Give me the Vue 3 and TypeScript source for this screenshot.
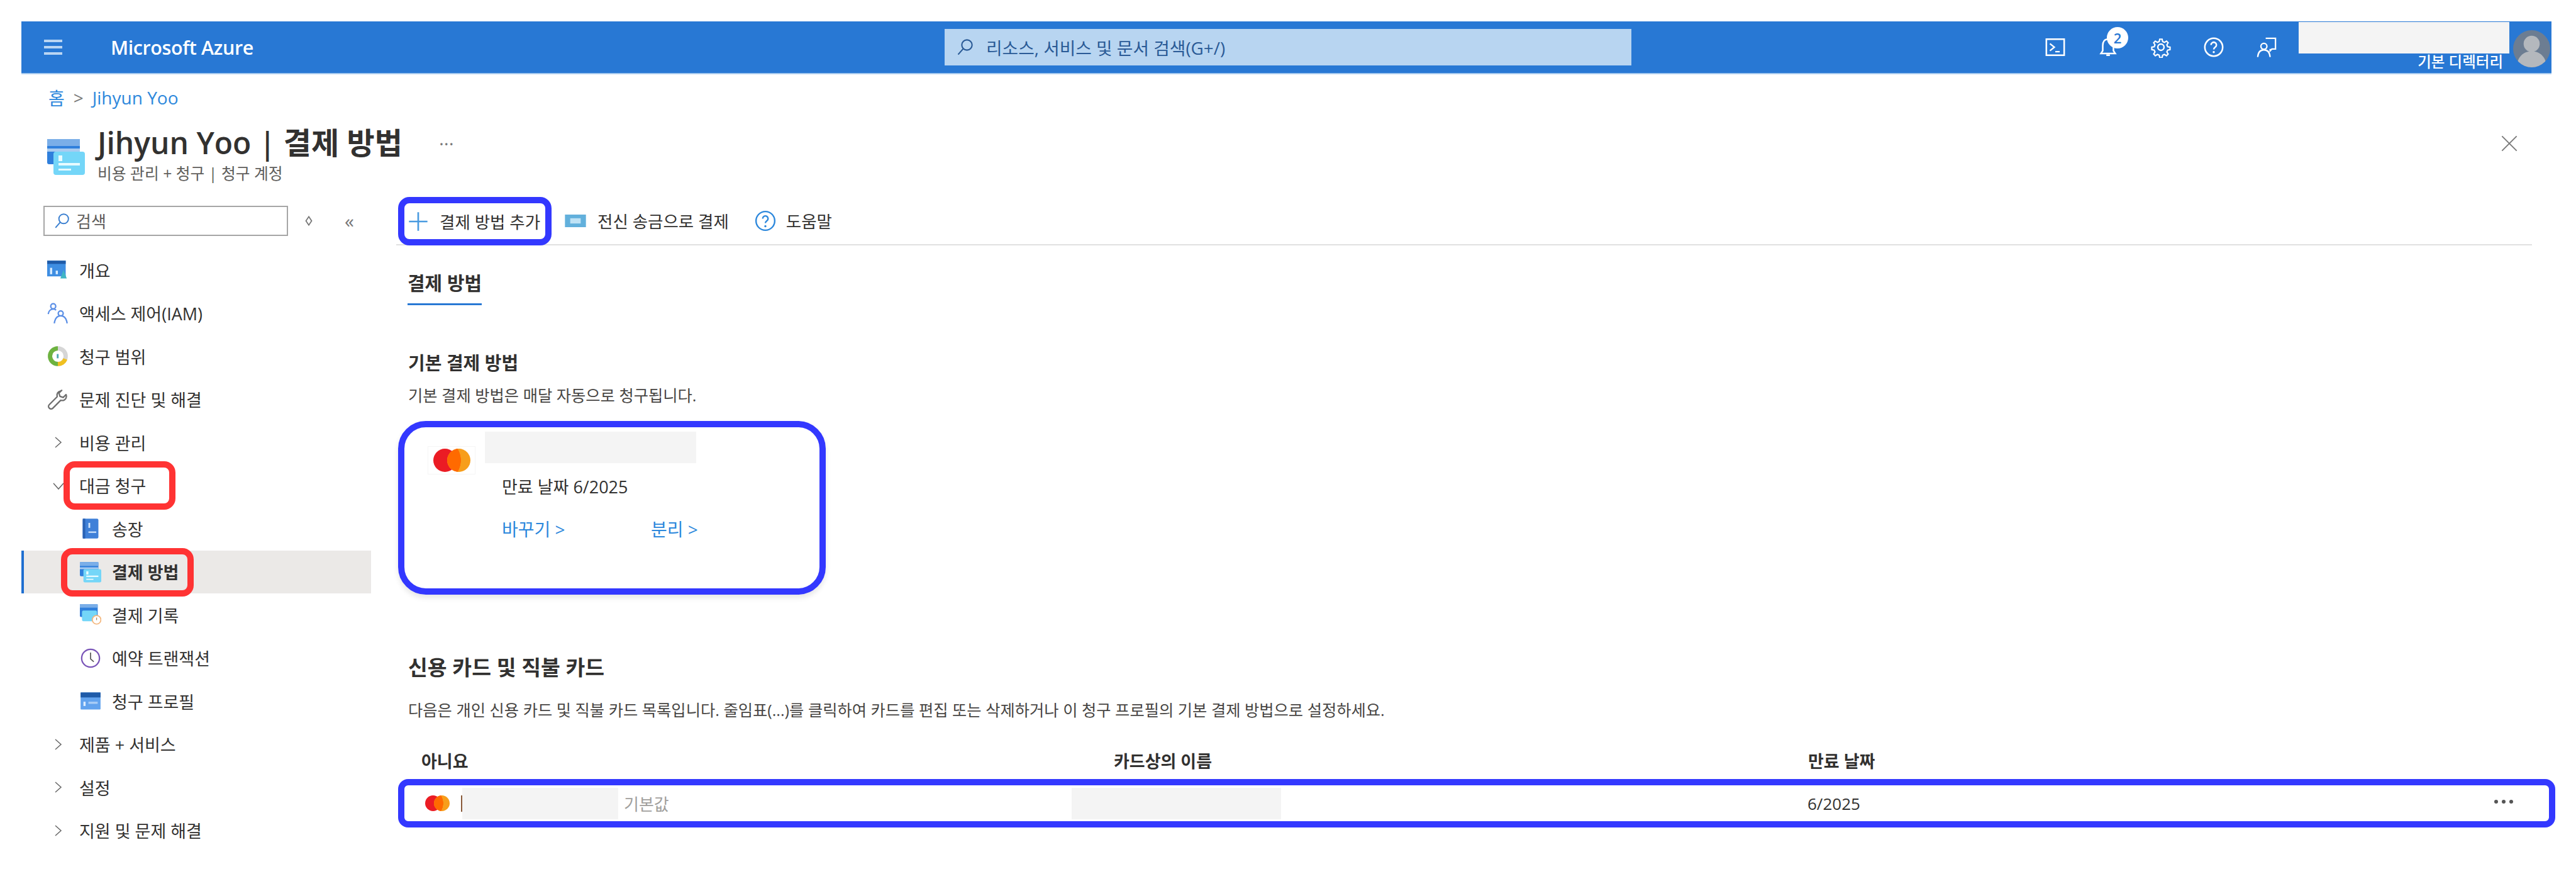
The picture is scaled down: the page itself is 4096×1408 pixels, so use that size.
<script setup lang="ts">
interface MenuItem {
  label: string
  icon?: string
  chevron?: 'right' | 'down'
  child?: boolean
  active?: boolean
  mark?: 'group' | 'entry'
}

const menu: MenuItem[] = [
  { label: '개요', icon: 'i-overview' },
  { label: '액세스 제어(IAM)', icon: 'i-iam' },
  { label: '청구 범위', icon: 'i-scope' },
  { label: '문제 진단 및 해결', icon: 'i-wrench' },
  { label: '비용 관리', chevron: 'right' },
  { label: '대금 청구', chevron: 'down', mark: 'group' },
  { label: '송장', icon: 'i-invoice', child: true },
  { label: '결제 방법', icon: 'i-card', child: true, active: true, mark: 'entry' },
  { label: '결제 기록', icon: 'i-history', child: true },
  { label: '예약 트랜잭션', icon: 'i-clock', child: true },
  { label: '청구 프로필', icon: 'i-profile', child: true },
  { label: '제품 + 서비스', chevron: 'right' },
  { label: '설정', chevron: 'right' },
  { label: '지원 및 문제 해결', chevron: 'right' },
]
</script>

<template>
  <div class="page">
    <svg class="defs" aria-hidden="true">
      <symbol id="i-card" viewBox="0 0 60 60">
        <rect x="0" y="2" width="52" height="40" rx="3" fill="#2f7fdc" />
        <rect x="0" y="2" width="52" height="11" fill="#7aaee8" />
        <rect x="0" y="17" width="52" height="5" fill="#a9cbf0" />
        <rect x="10" y="22" width="50" height="37" rx="4" fill="#74d6f8" />
        <rect x="18" y="40" width="34" height="4" fill="#e8fbff" />
        <rect x="18" y="49" width="20" height="3" fill="#e8fbff" />
        <rect x="18" y="28" width="6" height="9" fill="#e8fbff" />
      </symbol>
      <symbol id="i-history" viewBox="0 0 60 60">
        <rect x="0" y="0" width="50" height="36" rx="3" fill="#2f7fdc" />
        <rect x="0" y="0" width="50" height="10" fill="#7aaee8" />
        <rect x="6" y="18" width="42" height="30" rx="4" fill="#74d6f8" />
        <circle cx="47" cy="44" r="12" fill="#fff" stroke="#f3b57a" stroke-width="3" />
        <path d="M47 38v7" stroke="#a87a4a" stroke-width="2" />
      </symbol>
      <symbol id="i-overview" viewBox="0 0 60 60">
        <rect x="0" y="4" width="52" height="44" fill="#3f8ee2" />
        <rect x="0" y="4" width="52" height="9" fill="#1f5ba8" />
        <rect x="8" y="24" width="6" height="18" fill="#d8ecff" />
        <rect x="24" y="32" width="6" height="10" fill="#d8ecff" />
        <path d="M46 30l9 24H37z" fill="#3fb5c4" />
      </symbol>
      <symbol id="i-iam" viewBox="0 0 60 60">
        <g fill="none" stroke="#5b8fe6" stroke-width="4">
          <circle cx="17" cy="10" r="7" />
          <path d="M3 32c1-9 7-14 14-14 3 0 6 1 8 3" />
          <circle cx="38" cy="30" r="7" />
          <path d="M20 58c2-14 9-21 18-21s16 7 18 21" />
        </g>
      </symbol>
      <symbol id="i-scope" viewBox="0 0 60 60">
        <circle cx="30" cy="30" r="22" fill="none" stroke="#d6d6d6" stroke-width="12" />
        <path d="M30 52a22 22 0 0 1 0-44" fill="none" stroke="#6db33f" stroke-width="12" />
        <path d="M51 38a22 22 0 0 1-21 14" fill="none" stroke="#f0c020" stroke-width="12" />
        <rect x="27" y="24" width="5" height="12" fill="#4aa5b0" />
      </symbol>
      <symbol id="i-wrench" viewBox="0 0 60 60">
        <path d="M38 6c-8 1-12 8-10 16L6 44c-3 3-3 7 0 10s7 3 10 0l22-22c8 2 15-2 16-10 0-2 0-4-1-6l-8 8-9-3-3-9 8-8c-1 0-2 1-3 2z" fill="none" stroke="#6e6e6e" stroke-width="4" stroke-linejoin="round" />
      </symbol>
      <symbol id="i-invoice" viewBox="0 0 60 60">
        <rect x="8" y="2" width="44" height="56" rx="4" fill="#3f80d8" />
        <rect x="8" y="2" width="7" height="56" fill="#2a62b4" />
        <rect x="24" y="14" width="5" height="14" fill="#cfe3fb" />
        <rect x="24" y="38" width="22" height="4" fill="#cfe3fb" />
      </symbol>
      <symbol id="i-clock" viewBox="0 0 60 60">
        <circle cx="30" cy="30" r="25" fill="none" stroke="#7a55b8" stroke-width="4" />
        <path d="M30 14v18l9 8" fill="none" stroke="#555" stroke-width="3" />
      </symbol>
      <symbol id="i-profile" viewBox="0 0 60 60">
        <rect x="2" y="6" width="56" height="48" rx="2" fill="#62a3ee" />
        <rect x="2" y="6" width="56" height="14" fill="#1f5ba8" />
        <rect x="10" y="32" width="6" height="12" fill="#dcecff" />
        <rect x="24" y="32" width="26" height="6" fill="#a9cdf6" />
      </symbol>
    </svg>

    <header class="topbar">
      <div class="brand">
        <div class="burger"><i></i><i></i><i></i></div>
        <span class="brand-name">Microsoft Azure</span>
      </div>
      <div class="global-search">
        <svg viewBox="0 0 24 24" class="search-ico">
          <circle cx="15" cy="9" r="7" fill="none" stroke="currentColor" stroke-width="1.8" />
          <path d="M10 14L3 22" stroke="currentColor" stroke-width="1.8" />
        </svg>
        <span>리소스, 서비스 및 문서 검색(G+/)</span>
      </div>
      <div class="top-right">
        <button class="top-btn">
          <svg viewBox="0 0 24 24"><rect x="2" y="3" width="20" height="18" fill="none" stroke="#fff" stroke-width="1.8" /><path d="M6 8l5 4-5 4M12 17h5" fill="none" stroke="#fff" stroke-width="1.6" /></svg>
        </button>
        <button class="top-btn">
          <svg viewBox="0 0 24 24"><path d="M12 3c-4 0-6 3-6 7v6l-2 3h16l-2-3v-6c0-4-2-7-6-7zM10 21h4" fill="none" stroke="#fff" stroke-width="1.8" /></svg>
          <span class="badge">2</span>
        </button>
        <button class="top-btn">
          <svg viewBox="0 0 24 24"><g fill="none" stroke="#fff" stroke-width="1.7"><circle cx="12" cy="12" r="3.5" /><path d="M10.5 2h3l.6 3 2.2 1 2.7-1.6 2 2.1-1.6 2.6 1 2.3 3 .6v3l-3 .6-1 2.3 1.6 2.6-2 2.1-2.7-1.6-2.2 1-.6 3h-3l-.6-3-2.2-1-2.7 1.6-2-2.1 1.6-2.6-1-2.3-3-.6v-3l3-.6 1-2.3-1.6-2.6 2-2.1 2.7 1.6 2.2-1z" transform="translate(1.2 1.2) scale(.9)" /></g></svg>
        </button>
        <button class="top-btn">
          <svg viewBox="0 0 24 24"><g fill="none" stroke="#fff" stroke-width="1.8"><circle cx="12" cy="12" r="10" /><path d="M9 9.5a3 3 0 1 1 4.6 2.5c-1 .7-1.6 1.3-1.6 2.5" /></g><circle cx="12" cy="17.5" r="1.2" fill="#fff" /></svg>
        </button>
        <button class="top-btn">
          <svg viewBox="0 0 24 24"><g fill="none" stroke="#fff" stroke-width="1.6"><path d="M11 2h11v12h-4l-2 2v-2" /><circle cx="9" cy="11" r="3.4" /><path d="M2 23c.5-5 3-8 7-8s6.5 3 7 8" /></g></svg>
        </button>
        <div class="account">
          <div class="account-mask"></div>
          <span>기본 디렉터리</span>
        </div>
        <div class="avatar">
          <svg viewBox="0 0 60 60"><circle cx="30" cy="22" r="13" fill="#b4b8bd" /><path d="M6 60c0-16 10-26 24-26s24 10 24 26z" fill="#b4b8bd" /></svg>
        </div>
      </div>
    </header>

    <nav class="crumbs">
      <a>홈</a>
      <span class="crumb-sep">&gt;</span>
      <a>Jihyun Yoo</a>
    </nav>

    <div class="blade-head">
      <svg class="blade-icon"><use href="#i-card" /></svg>
      <div class="blade-titles">
        <div class="title-row">
          <h1>Jihyun Yoo | 결제 방법</h1>
          <span class="title-more">···</span>
        </div>
        <div class="blade-sub">비용 관리 + 청구 | 청구 계정</div>
      </div>
      <svg class="close" viewBox="0 0 24 24"><path d="M2 2l20 20M22 2L2 22" stroke="#7a7a7a" stroke-width="1.6" /></svg>
    </div>

    <div class="blade-body">
      <aside class="side">
        <div class="side-tools">
          <div class="side-search">
            <svg viewBox="0 0 24 24" class="search-ico blue">
              <circle cx="15" cy="9" r="7" fill="none" stroke="currentColor" stroke-width="1.8" />
              <path d="M10 14L3 22" stroke="currentColor" stroke-width="1.8" />
            </svg>
            <span>검색</span>
          </div>
          <svg class="diamond" viewBox="0 0 12 16"><path d="M6 2l4 6-4 6-4-6z" fill="none" stroke="#777" stroke-width="1.6" /></svg>
          <span class="collapse">«</span>
        </div>
        <ul class="menu">
          <li v-for="item in menu" :key="item.label" class="menu-row" :class="{ child: item.child, active: item.active }">
            <svg v-if="item.icon" class="menu-icon"><use :href="'#' + item.icon" /></svg>
            <svg v-else class="menu-chev" viewBox="0 0 20 20">
              <path v-if="item.chevron === 'down'" d="M2 6l8 9 8-9" fill="none" stroke="#666" stroke-width="1.5" />
              <path v-else d="M5 2l9 8-9 8" fill="none" stroke="#666" stroke-width="1.5" />
            </svg>
            <span>{{ item.label }}</span>
            <i v-if="item.mark" class="red-mark" :class="item.mark"></i>
          </li>
        </ul>
      </aside>

      <main class="content">
        <div class="toolbar">
          <button class="tool add">
            <svg viewBox="0 0 24 24"><path d="M12 1v22M1 12h22" stroke="#4a9be0" stroke-width="2" /></svg>
            <span>결제 방법 추가</span>
          </button>
          <button class="tool wire">
            <svg viewBox="0 0 40 24"><rect width="40" height="24" fill="#62b0dc" /><rect x="10" y="7" width="20" height="10" fill="#bfe2f5" /></svg>
            <span>전신 송금으로 결제</span>
          </button>
          <button class="tool help">
            <svg viewBox="0 0 24 24"><circle cx="12" cy="12" r="10.5" fill="none" stroke="#2d88dc" stroke-width="1.7" /><path d="M9 9.5a3 3 0 1 1 4.6 2.5c-1 .7-1.6 1.3-1.6 2.5" fill="none" stroke="#2d88dc" stroke-width="1.7" /><circle cx="12" cy="18" r="1.2" fill="#2d88dc" /></svg>
            <span>도움말</span>
          </button>
        </div>

        <div class="tab">결제 방법</div>

        <h2 class="h-default">기본 결제 방법</h2>
        <p class="desc default-desc">기본 결제 방법은 매달 자동으로 청구됩니다.</p>

        <section class="pay-card">
          <div class="mc-box">
            <span class="mc"><i class="red"></i><i class="orange"></i></span>
          </div>
          <div class="pay-info">
            <div class="masked card-mask"></div>
            <div class="expire">만료 날짜 6/2025</div>
            <div class="links">
              <a class="link-change">바꾸기 &gt;</a>
              <a>분리 &gt;</a>
            </div>
          </div>
        </section>

        <h2 class="h-list">신용 카드 및 직불 카드</h2>
        <p class="desc list-desc">다음은 개인 신용 카드 및 직불 카드 목록입니다. 줄임표(...)를 클릭하여 카드를 편집 또는 삭제하거나 이 청구 프로필의 기본 결제 방법으로 설정하세요.</p>

        <div class="table-head">
          <span>아니요</span>
          <span>카드상의 이름</span>
          <span>만료 날짜</span>
        </div>
        <div class="table-row">
          <div class="cell-card">
            <span class="mc small"><i class="red"></i><i class="orange"></i></span>
            <span class="pipe"></span>
            <div class="masked row-mask"></div>
            <span class="default-tag">기본값</span>
          </div>
          <div class="cell-name"><div class="masked row-mask"></div></div>
          <div class="cell-date">
            <span>6/2025</span>
            <span class="row-more"><i></i><i></i><i></i></span>
          </div>
        </div>
      </main>
    </div>
  </div>
</template>

<style scoped>
.page {
  box-sizing: border-box;
  width: 4096px;
  padding: 34px 33px 0 34px;
  color: #323130;
  font-family: "Open Sans", "Noto Sans CJK KR", sans-serif;
  font-size: 27px;
}
.defs {
  position: absolute;
  width: 0;
  height: 0;
}
.topbar {
  display: grid;
  grid-template-columns: 1468px 1092px 1fr;
  align-items: center;
  height: 84px;
  margin-right: 6px;
  background: #2878d4;
  border-bottom: 2px solid #a9cbef;
  box-sizing: border-box;
  color: #fff;
}
.brand {
  display: flex;
  align-items: center;
  padding-left: 36px;
}
.burger {
  display: flex;
  flex-direction: column;
  gap: 6px;
  width: 29px;
}
.burger i {
  height: 4px;
  background: #b9d5f3;
}
.brand-name {
  margin-left: 77px;
  font-size: 30.5px;
  font-weight: 600;
  letter-spacing: -0.4px;
}
.global-search {
  display: flex;
  align-items: center;
  height: 58px;
  padding-left: 18px;
  background: #b8d5f1;
  color: #2a5a96;
  font-size: 27.8px;
}
.search-ico {
  width: 28px;
  height: 28px;
  margin-right: 20px;
  flex: none;
}
.search-ico.blue {
  color: #3a7fd0;
  margin-right: 10px;
  width: 26px;
  height: 26px;
}
.top-right {
  display: flex;
  align-items: center;
  justify-content: flex-end;
  height: 100%;
}
.top-btn {
  position: relative;
  display: flex;
  align-items: center;
  justify-content: center;
  width: 84px;
  height: 100%;
  padding: 0;
  background: none;
  border: 0;
}
.top-btn svg {
  width: 34px;
  height: 34px;
}
.badge {
  position: absolute;
  top: 9px;
  left: 40px;
  width: 34px;
  height: 34px;
  border-radius: 50%;
  background: #fff;
  color: #2878d4;
  font-family: "Open Sans", sans-serif;
  font-size: 22px;
  font-weight: 600;
  line-height: 34px;
  text-align: center;
}
.account {
  display: flex;
  flex-direction: column;
  align-items: flex-end;
  align-self: flex-start;
  width: 335px;
  margin-left: 9px;
}
.account-mask {
  width: 100%;
  height: 50px;
  margin-top: 1px;
  background: #f4f4f4;
}
.account span {
  margin-right: 10px;
  font-size: 23.5px;
  font-weight: 500;
  line-height: 26px;
  white-space: nowrap;
}
.avatar {
  width: 59px;
  height: 59px;
  margin: 14px 2px 0 6px;
  align-self: flex-start;
  border-radius: 50%;
  background: #6c7d92;
  overflow: hidden;
}
.avatar svg {
  display: block;
}
.crumbs {
  display: flex;
  align-items: center;
  gap: 14px;
  height: 36px;
  margin-top: 19px;
  padding-left: 43px;
  color: #2d88dc;
  font-size: 28px;
}
.crumb-sep {
  color: #777;
}
.blade-head {
  display: flex;
  align-items: flex-start;
  height: 116px;
  margin-top: 24px;
  padding-left: 41px;
}
.blade-icon {
  width: 60px;
  height: 60px;
  margin-top: 22px;
  flex: none;
}
.blade-titles {
  margin-left: 20px;
  flex: 1;
}
.title-row {
  display: flex;
  align-items: center;
  height: 60px;
}
h1 {
  margin: 0;
  font-size: 48px;
  font-weight: 600;
  line-height: 60px;
  white-space: nowrap;
}
.title-more {
  margin-left: 58px;
  color: #777;
  font-size: 30px;
}
.blade-sub {
  color: #605e5c;
  font-size: 24.8px;
  line-height: 36px;
}
.close {
  width: 28px;
  height: 28px;
  margin: 17px 59px 0 0;
}
.blade-body {
  display: flex;
  margin-top: 0;
}
.side {
  width: 556px;
  flex: none;
}
.side-tools {
  display: flex;
  align-items: center;
  height: 48px;
  margin-top: 14px;
  padding-left: 35px;
}
.side-search {
  box-sizing: border-box;
  display: flex;
  align-items: center;
  width: 389px;
  height: 48px;
  padding-left: 14px;
  border: 2px solid #a6a6a6;
  color: #605e5c;
  font-size: 26px;
}
.diamond {
  width: 14px;
  height: 18px;
  margin-left: 26px;
}
.collapse {
  margin-left: 50px;
  color: #777;
  font-size: 30px;
  line-height: 1;
}
.menu {
  margin: 20px 0 0;
  padding: 0;
  list-style: none;
}
.menu-row {
  position: relative;
  display: flex;
  align-items: center;
  box-sizing: border-box;
  height: 68.5px;
  padding-left: 41px;
  white-space: nowrap;
}
.menu-row.child {
  padding-left: 93px;
}
.menu-row.active {
  background: #ebe9e7;
  border-left: 4px solid #1f6fd0;
  padding-left: 89px;
  font-weight: 700;
}
.menu-icon {
  width: 34px;
  height: 34px;
  margin-right: 17px;
  flex: none;
}
.menu-chev {
  width: 20px;
  height: 20px;
  margin: 0 23px 0 8px;
  flex: none;
}
.red-mark {
  position: absolute;
  box-sizing: border-box;
  border: 10px solid #ff3333;
  border-radius: 18px;
}
.red-mark.group {
  top: -5px;
  left: 67px;
  width: 178px;
  height: 77px;
}
.red-mark.entry {
  top: -4px;
  left: 59px;
  width: 211px;
  height: 77px;
}
.content {
  flex: 1;
  min-width: 0;
  margin-left: 40px;
}
.toolbar {
  display: flex;
  align-items: stretch;
  height: 77px;
  border-bottom: 2px solid #e1e1e1;
  box-sizing: border-box;
  margin-right: 37px;
}
.tool {
  display: flex;
  align-items: center;
  padding: 0;
  background: none;
  border: 0;
  color: #323130;
  font: inherit;
  font-size: 26.5px;
  white-space: nowrap;
}
.tool svg {
  flex: none;
}
.add {
  box-sizing: border-box;
  width: 244px;
  height: 77px;
  margin-left: 3px;
  padding-left: 6px;
  border: 10px solid #3338ff;
  border-radius: 18px;
}
.add svg {
  width: 32px;
  height: 32px;
  margin-right: 18px;
}
.wire {
  margin-left: 21px;
}
.wire svg {
  width: 34px;
  height: 20px;
  margin-right: 18px;
}
.help {
  margin-left: 41px;
}
.help svg {
  width: 34px;
  height: 34px;
  margin-right: 16px;
}
.tab {
  display: inline-block;
  margin: 42px 0 0 18px;
  padding-bottom: 14px;
  border-bottom: 3px solid #2878d4;
  font-size: 30px;
  font-weight: 700;
  line-height: 36px;
}
h2 {
  margin: 0;
  font-weight: 700;
}
.h-default {
  margin: 74px 0 0 19px;
  font-size: 29px;
  line-height: 36px;
}
.desc {
  margin: 0 0 0 19px;
  color: #484644;
  font-size: 25.3px;
  line-height: 32px;
  white-space: nowrap;
}
.default-desc {
  margin-top: 17px;
}
.pay-card {
  box-sizing: border-box;
  display: flex;
  width: 680px;
  height: 276px;
  margin: 25px 0 0 3px;
  border: 10px solid #3338ff;
  border-radius: 44px;
  box-shadow: 0 5px 8px rgba(0, 0, 0, 0.1);
}
.mc-box {
  box-sizing: border-box;
  display: flex;
  align-items: center;
  justify-content: center;
  width: 76px;
  height: 45px;
  margin: 30px 0 0 37px;
  border: 1px solid #f5f5f5;
}
.mc {
  position: relative;
  display: block;
  width: 59px;
  height: 37px;
  flex: none;
}
.mc i {
  position: absolute;
  top: 0;
  width: 37px;
  height: 37px;
  border-radius: 50%;
}
.mc .red {
  left: 0;
  background: #eb1c24;
}
.mc .orange {
  right: 0;
  background: #f79e1b;
  mix-blend-mode: normal;
}
.mc .orange::before {
  content: "";
  position: absolute;
  inset: 0;
  border-radius: 50%;
  background: radial-gradient(circle at -36% 50%, #ff6a00 0 65%, transparent 66%);
}
.pay-info {
  margin-left: 15px;
  padding-top: 7px;
}
.masked {
  background: #f4f4f4;
}
.card-mask {
  width: 336px;
  height: 50px;
}
.expire {
  margin: 22px 0 0 27px;
  font-size: 27px;
  line-height: 32px;
  white-space: nowrap;
}
.links {
  display: flex;
  margin: 35px 0 0 27px;
  color: #2d88dc;
  font-size: 28px;
  line-height: 32px;
}
.link-change {
  width: 237px;
}
.h-list {
  margin: 95px 0 0 19px;
  font-size: 33.5px;
  line-height: 40px;
}
.list-desc {
  margin-top: 32px;
}
.table-head {
  display: grid;
  grid-template-columns: 1101px 1104px 1fr;
  margin-top: 49px;
  padding-left: 40px;
  font-size: 27px;
  font-weight: 700;
  line-height: 34px;
}
.table-row {
  box-sizing: border-box;
  display: grid;
  grid-template-columns: 1127px 1104px 1fr;
  align-items: center;
  height: 77px;
  margin: 11px 0 0 3px;
  border: 10px solid #3338ff;
  border-radius: 16px;
  font-size: 26px;
}
.cell-card {
  display: flex;
  align-items: center;
  padding-left: 33px;
}
.mc.small {
  width: 39px;
  height: 25px;
}
.mc.small i {
  width: 25px;
  height: 25px;
}
.pipe {
  width: 2px;
  height: 26px;
  margin-left: 18px;
  background: #8a5a3a;
}
.row-mask {
  width: 333px;
  height: 50px;
}
.cell-name .row-mask {
  margin-left: -66px;
}
.cell-card .row-mask {
  width: 248px;
}
.default-tag {
  margin-left: 9px;
  color: #a19f9d;
}
.cell-date {
  display: flex;
  align-items: center;
  justify-content: space-between;
}
.row-more {
  display: flex;
  gap: 6px;
  margin: -6px 57px 0 0;
}
.row-more i {
  width: 6px;
  height: 6px;
  border-radius: 50%;
  background: #555;
}
</style>

<style>
body {
  margin: 0;
  background: #fff;
  overflow: hidden;
}
</style>
